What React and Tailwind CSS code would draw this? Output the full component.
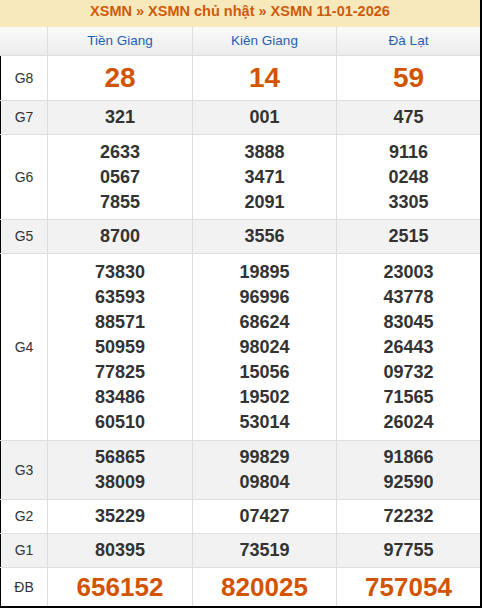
import React from "react";

const cols = ["Tiền Giang", "Kiên Giang", "Đà Lạt"];

const rows = [
  { label: "G8", h: "h-[45px]", bg: "bg-white", big: "text-[28px] text-[#d35400]", data: [["28"], ["14"], ["59"]] },
  { label: "G7", h: "h-[34px]", bg: "bg-[#f2f2f2]", data: [["321"], ["001"], ["475"]] },
  { label: "G6", h: "h-[85px]", bg: "bg-white", data: [["2633", "0567", "7855"], ["3888", "3471", "2091"], ["9116", "0248", "3305"]] },
  { label: "G5", h: "h-[34px]", bg: "bg-[#f2f2f2]", data: [["8700"], ["3556"], ["2515"]] },
  {
    label: "G4",
    h: "h-[187px]",
    bg: "bg-white",
    data: [
      ["73830", "63593", "88571", "50959", "77825", "83486", "60510"],
      ["19895", "96996", "68624", "98024", "15056", "19502", "53014"],
      ["23003", "43778", "83045", "26443", "09732", "71565", "26024"],
    ],
  },
  { label: "G3", h: "h-[59px]", bg: "bg-[#f2f2f2]", data: [["56865", "38009"], ["99829", "09804"], ["91866", "92590"]] },
  { label: "G2", h: "h-[34px]", bg: "bg-white", data: [["35229"], ["07427"], ["72232"]] },
  { label: "G1", h: "h-[34px]", bg: "bg-[#f2f2f2]", data: [["80395"], ["73519"], ["97755"]] },
  { label: "ĐB", h: "h-[38px]", bg: "bg-white", big: "text-[26px] text-[#d35400]", last: true, data: [["656152"], ["820025"], ["757054"]] },
];

const widths = ["w-[145px] border-r", "w-[144px] border-r", "w-[143px]"];

export default function App() {
  return (
    <div className="w-[482px] h-[608px] bg-white border-r-2 border-b-2 border-black font-['Liberation_Sans',Arial,sans-serif] overflow-hidden">
      <div className="h-[27px] bg-[#f8e9bd] flex justify-center pt-[2px] text-[14.5px] font-bold text-[#cf5a0c] leading-[18px]">
        XSMN » XSMN chủ nhật » XSMN 11-01-2026
      </div>
      <div className="flex h-[29px] border-b border-[#dedede] bg-gradient-to-b from-[#fafafa] to-[#ececec]">
        <div className="w-[48px] border-r border-[#dedede]" />
        {cols.map((c, i) => (
          <div key={c} className={`${widths[i]} border-[#dedede] flex items-center justify-center text-[13.5px] text-[#1d5fb3]`}>
            {c}
          </div>
        ))}
      </div>
      {rows.map((r) => (
        <div key={r.label} className={`flex ${r.h} ${r.bg} ${r.last ? "" : "border-b border-[#dedede]"}`}>
          <div className="w-[48px] border-l border-l-black border-r border-r-[#dedede] flex items-center justify-center text-[14px] text-[#333]">
            {r.label}
          </div>
          {r.data.map((vals, i) => (
            <div key={i} className={`${widths[i]} border-[#dedede] flex flex-col items-center justify-center font-bold`}>
              {vals.map((v, j) => (
                <div key={j} className={r.big ? `${r.big} leading-[30px]` : "text-[18px] leading-[25px] text-[#333]"}>
                  {v}
                </div>
              ))}
            </div>
          ))}
        </div>
      ))}
    </div>
  );
}
